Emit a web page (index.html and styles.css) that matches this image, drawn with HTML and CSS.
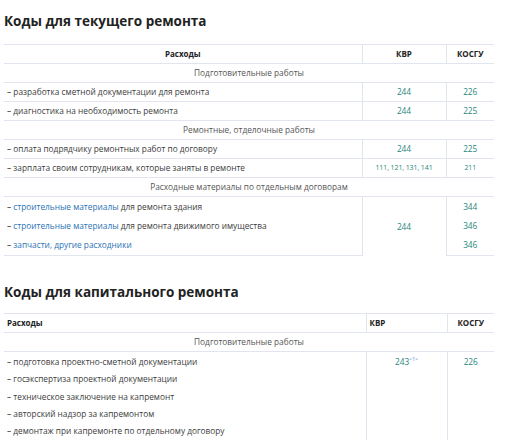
FILE: index.html
```html
<!DOCTYPE html>
<html lang="ru">
<head>
<meta charset="utf-8">
<link rel="stylesheet" href="styles.css">
</head>
<body>
<div class="page">
  <h2 class="title first">Коды для текущего ремонта</h2>
  <table class="codes t1">
    <colgroup><col class="c-exp"><col class="c-kvr"><col class="c-kosgu"></colgroup>
    <tr class="head">
      <th class="center">Расходы</th>
      <th class="center">КВР</th>
      <th class="center">КОСГУ</th>
    </tr>
    <tr class="section"><td colspan="3">Подготовительные работы</td></tr>
    <tr>
      <td><span class="dash">–</span> разработка сметной документации для ремонта</td>
      <td class="num">244</td>
      <td class="num">226</td>
    </tr>
    <tr>
      <td><span class="dash">–</span> диагностика на необходимость ремонта</td>
      <td class="num">244</td>
      <td class="num">225</td>
    </tr>
    <tr class="section"><td colspan="3">Ремонтные, отделочные работы</td></tr>
    <tr>
      <td><span class="dash">–</span> оплата подрядчику ремонтных работ по договору</td>
      <td class="num">244</td>
      <td class="num">225</td>
    </tr>
    <tr>
      <td><span class="dash">–</span> зарплата своим сотрудникам, которые заняты в ремонте</td>
      <td class="num small">111, 121, 131, 141</td>
      <td class="num small">211</td>
    </tr>
    <tr class="section"><td colspan="3">Расходные материалы по отдельным договорам</td></tr>
    <tr class="nb">
      <td><span class="dash">–</span> <span class="link">строительные материалы</span> для ремонта здания</td>
      <td class="num" rowspan="3">244</td>
      <td class="num">344</td>
    </tr>
    <tr class="nb">
      <td><span class="dash">–</span> <span class="link">строительные материалы</span> для ремонта движимого имущества</td>
      <td class="num">346</td>
    </tr>
    <tr class="nb-last">
      <td><span class="dash">–</span> <span class="link">запчасти, другие расходники</span></td>
      <td class="num">346</td>
    </tr>
  </table>

  <h2 class="title second">Коды для капитального ремонта</h2>
  <table class="codes t2">
    <colgroup><col class="c-exp2"><col class="c-kvr2"><col class="c-kosgu2"></colgroup>
    <tr class="head">
      <th class="left">Расходы</th>
      <th class="left">КВР</th>
      <th class="center">КОСГУ</th>
    </tr>
    <tr class="section"><td colspan="3">Подготовительные работы</td></tr>
    <tr class="list">
      <td>
        <p><span class="dash">–</span> подготовка проектно-сметной документации</p>
        <p><span class="dash">–</span> госэкспертиза проектной документации</p>
        <p><span class="dash">–</span> техническое заключение на капремонт</p>
        <p><span class="dash">–</span> авторский надзор за капремонтом</p>
        <p><span class="dash">–</span> демонтаж при капремонте по отдельному договору</p>
      </td>
      <td class="num top">243<sup class="ref">&lt;1&gt;</sup></td>
      <td class="num top">226</td>
    </tr>
  </table>
</div>
</body>
</html>
```

FILE: styles.css
```css
html, body {
  margin: 0;
  padding: 0;
  background: #ffffff;
}

body {
  font-family: "Open Sans", "Liberation Sans", sans-serif;
  color: #3c3c3c;
}

.page {
  padding: 0 12px 0 4px;
  width: 490px;
}

.title {
  font-family: "Open Sans", "Liberation Sans", sans-serif;
  font-weight: 700;
  font-size: 13.5px;
  line-height: 20px;
  color: #222222;
  margin: 0;
}

.title.first {
  margin: 11px 0 13px;
}

.title.second {
  margin: 26px 0 11px;
}

.codes {
  width: 490px;
  border-collapse: collapse;
  table-layout: fixed;
  font-size: 8.3px;
  line-height: 10px;
}

.c-exp { width: 358px; }
.c-kvr { width: 84px; }
.c-kosgu { width: 48px; }

.c-exp2 { width: 362px; }
.c-kvr2 { width: 81px; }
.c-kosgu2 { width: 47px; }

.codes th,
.codes td {
  padding: 4px 3px;
  border-top: 1px solid #e1e5f0;
  border-bottom: 1px solid #e1e5f0;
  border-left: 1px solid #e1e5f0;
  white-space: nowrap;
  vertical-align: middle;
}

.codes th:first-child,
.codes td:first-child {
  border-left: none;
}

.codes th {
  font-weight: 700;
  color: #222222;
  font-size: 8px;
}

.codes th.center { text-align: center; }
.codes th.left { text-align: left; }

.section td {
  text-align: center;
  color: #555555;
}

.nb td {
  border-bottom: none;
  line-height: 11px;
}

.nb-last td {
  line-height: 11px;
  padding-bottom: 5px;
}

.nb + tr td,
.nb + .nb td {
  border-top: none;
}

.num {
  text-align: center;
  color: #27877a;
}

.num.small {
  font-size: 7px;
  letter-spacing: -0.1px;
}

.num.top {
  vertical-align: top;
  padding-top: 5px;
}

.dash {
  color: #222222;
}

.link {
  color: #2b73b5;
}

.t2 .list td {
  border-bottom: none;
}

.t2 .list td:first-child {
  padding-top: 1px;
}

.t2 p {
  margin: 0;
  line-height: 17.3px;
}

.ref {
  font-size: 5px;
  color: #4a7bc0;
  vertical-align: 4px;
  line-height: 0;
}
```
